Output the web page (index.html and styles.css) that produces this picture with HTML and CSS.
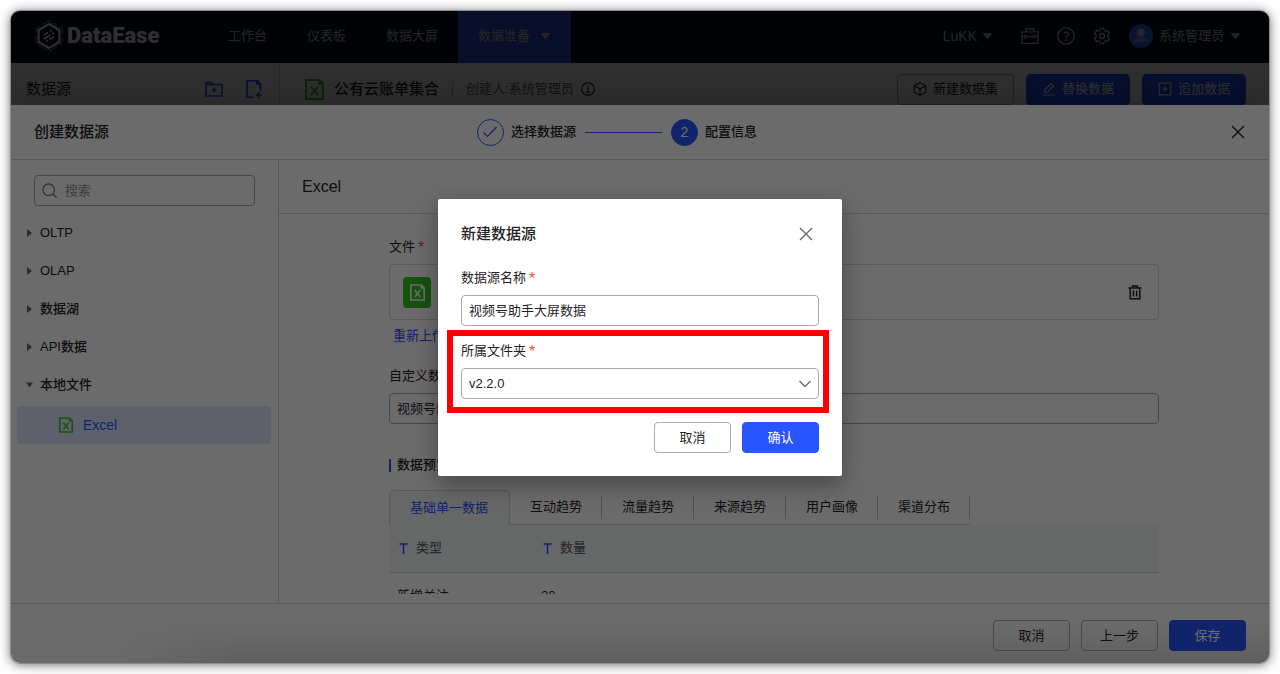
FILE: index.html
```html
<!DOCTYPE html>
<html lang="zh-CN">
<head>
<meta charset="utf-8">
<meta name="viewport" content="width=device-width, initial-scale=1">
<title>DataEase</title>
<link rel="stylesheet" href="styles.css">
</head>
<body>
<svg class="defs" aria-hidden="true">
  <symbol id="excel" viewBox="0 0 18 20"><path d="M1 1h12.500L17 4.500V19H1z" fill="none" stroke="currentColor" stroke-width="2"/><path d="M12.500 0.500v5h5z" fill="currentColor"/><path d="M5.500 7l7 8.500M12.500 7l-7 8.500" stroke="currentColor" stroke-width="2" fill="none"/></symbol>
  <symbol id="close" viewBox="0 0 14 14"><path d="M1 1l12 12M13 1L1 13" stroke="currentColor" stroke-width="1.400" fill="none"/></symbol>
  <symbol id="caret" viewBox="0 0 11 8"><path d="M0.500 1h10L5.500 7.500z" fill="currentColor"/></symbol>
  <symbol id="text-type" viewBox="0 0 9 11"><path d="M0.500 1h8M4.500 1v10" stroke="currentColor" stroke-width="1.500" fill="none"/></symbol>
</svg>
<div class="window">
  <header class="topbar">
    <a class="brand" href="#" aria-label="DataEase">
      <svg class="brand-mark" viewBox="0 0 28 32" fill="none" stroke="currentColor"><path d="M14 4l10.400 6v12L14 28 3.600 22V10z" stroke-width="2.200"/><path d="M14 0.700L27.200 8.300v15.400L14 31.300 0.800 23.700V8.300z" stroke-width="0.600" stroke-dasharray="9 3"/><path d="M9 15l4.200-2.500M15 11.400l1.500-.9M8.500 19.200l7-4.200M17.200 14l2-1.200M11.300 21.500l1.500-.9M14.500 19.600l4.500-2.700" stroke-width="1.800"/></svg>
      <span>DataEase</span>
    </a>
    <nav class="menu">
      <a href="#">工作台</a>
      <a href="#">仪表板</a>
      <a href="#">数据大屏</a>
      <a class="active" href="#">数据准备<svg class="caret"><use href="#caret"/></svg></a>
    </nav>
    <div class="tools">
      <button class="bare org">LuKK<svg class="caret"><use href="#caret"/></svg></button>
      <button class="bare" aria-label="工具箱"><svg class="tool-icon" viewBox="0 0 18 18" fill="none" stroke="currentColor" stroke-width="1.200"><path d="M5 5V1.800h8V5M1 5h16v11.400H1zM1 9.500h2.200M6.200 9.500h5.600M14.800 9.500H17"/><circle cx="4.700" cy="9.500" r="1.500"/><circle cx="13.300" cy="9.500" r="1.500"/></svg></button>
      <button class="bare" aria-label="帮助"><svg class="tool-icon" viewBox="0 0 18 18" fill="none" stroke="currentColor" stroke-width="1.300"><circle cx="9" cy="9" r="8.200"/><path d="M6.800 7.300a2.200 2.200 0 1 1 3.300 1.900c-.8.500-1.100.8-1.100 1.700M9 12.300v1.500"/></svg></button>
      <button class="bare" aria-label="设置"><svg class="tool-icon" viewBox="0 0 18 18" fill="none" stroke="currentColor" stroke-width="1.300" stroke-linejoin="round"><path d="M7.300 1.300h3.400l.5 2 1.500.9 2-.6 1.700 2.900-1.500 1.500v2l1.500 1.500-1.700 2.900-2-.6-1.500.9-.5 2H7.300l-.5-2-1.500-.9-2 .6-1.700-2.900L3.100 10V8L1.600 6.500l1.700-2.900 2 .6 1.500-.9z"/><circle cx="9" cy="9" r="2.500"/></svg></button>
      <button class="bare user"><svg class="avatar" viewBox="0 0 24 24"><circle class="avatar-bg" cx="12" cy="12" r="12"/><circle class="avatar-face" cx="12" cy="8.500" r="4"/><path class="avatar-body" d="M5.500 18c0-3.500 2-4.500 4-4.500h5c2 0 4 1 4 4.500z"/></svg>系统管理员<svg class="caret"><use href="#caret"/></svg></button>
    </div>
  </header>
  <section class="subbar">
    <div class="sub-side">
      <h2>数据源</h2>
      <button class="bare" aria-label="新建文件夹"><svg class="sub-icon" viewBox="0 0 18 18" fill="none" stroke="currentColor" stroke-width="1.600"><path d="M1 16V2.500h5.500l1.500 2h9V16zM1 4.500h8M9 7.500v5M6.500 10h5"/></svg></button>
      <button class="bare" aria-label="新建数据源"><svg class="sub-icon" viewBox="0 0 18 18" fill="none" stroke="currentColor" stroke-width="1.600"><path d="M8.500 17.200H2V.8h10.500l3 3v7.200M12 .8v3.500h3.500M13.500 12v6M10.500 15h6"/></svg></button>
    </div>
    <div class="sub-main">
      <svg class="source-icon"><use href="#excel"/></svg>
      <h1>公有云账单集合</h1>
      <span class="creator">创建人:系统管理员</span>
      <svg class="info" viewBox="0 0 14 14" fill="none" stroke="currentColor" stroke-width="1.200"><circle cx="7" cy="7" r="6.300"/><path d="M5.500 6.200H7V10M5.200 10.200h3.600M6.300 3.900h1.200"/></svg>
      <button class="btn sub-btn"><svg class="btn-icon" viewBox="0 0 14 14" fill="none" stroke="currentColor" stroke-width="1.200"><path d="M7 .8l5.800 3v6.400L7 13.200l-5.800-3V3.800zM1.200 3.800L7 6.800l5.800-3M7 6.800v6.400"/></svg>新建数据集</button>
      <button class="btn primary sub-btn"><svg class="btn-icon" viewBox="0 0 14 14" fill="none" stroke="currentColor" stroke-width="1.200"><path d="M2.500 8L9 1.500 11.500 4 5 10.500H2.500zM1 13h12"/></svg>替换数据</button>
      <button class="btn primary sub-btn"><svg class="btn-icon" viewBox="0 0 14 14" fill="none" stroke="currentColor" stroke-width="1.200"><path d="M1.200 1.200h11.600v11.600H1.200zM7 4.500v5M4.500 7h5"/></svg>追加数据</button>
    </div>
  </section>

  <div class="drawer-layer">
    <section class="drawer">
      <header class="drawer-head">
        <h2>创建数据源</h2>
        <ol class="steps">
          <li><span class="dot done"><svg viewBox="0 0 16 12" fill="none" stroke="currentColor" stroke-width="1.200"><path d="M1.500 6.500L5.500 10.500 14.500 1"/></svg></span>选择数据源</li>
          <li class="link"></li>
          <li><span class="dot">2</span>配置信息</li>
        </ol>
        <button class="bare end" aria-label="关闭"><svg class="close"><use href="#close"/></svg></button>
      </header>
      <div class="drawer-body">
        <aside class="side">
          <label class="search">
            <svg viewBox="0 0 15 15" fill="none" stroke="currentColor" stroke-width="1.200"><circle cx="6.700" cy="6.700" r="5.800"/><path d="M11 11l3.500 3.500"/></svg>
            <input type="text" placeholder="搜索" aria-label="搜索">
          </label>
          <ul class="tree">
            <li><button class="node"><i class="arrow"></i>OLTP</button></li>
            <li><button class="node"><i class="arrow"></i>OLAP</button></li>
            <li><button class="node"><i class="arrow"></i>数据湖</button></li>
            <li><button class="node"><i class="arrow"></i>API数据</button></li>
            <li><button class="node"><i class="arrow open"></i>本地文件</button>
              <ul><li><button class="node leaf"><svg><use href="#excel"/></svg>Excel</button></li></ul>
            </li>
          </ul>
        </aside>
        <main class="main">
          <h3 class="main-title">Excel</h3>
          <div class="form">
            <span class="label">文件<b>*</b></span>
            <div class="file">
              <span class="file-icon"><svg><use href="#excel"/></svg></span>
              <button class="bare" aria-label="删除"><svg class="trash" viewBox="0 0 14 15" fill="none" stroke="currentColor" stroke-width="1.500"><path d="M0.500 3h13M4.500 2.500V1h5v1.500M2.200 3v10.800h9.600V3M5.400 5.500v6M8.600 5.500v6"/></svg></button>
            </div>
            <a class="reupload" href="#">重新上传</a>
            <label class="label" for="custom-name">自定义数据源名称</label>
            <input class="input" id="custom-name" type="text" value="视频号助手大屏数据">
            <h4 class="preview">数据预览</h4>
            <div class="tabs" role="tablist">
              <button class="tab current" role="tab" aria-selected="true">基础单一数据</button>
              <button class="tab" role="tab">互动趋势</button>
              <button class="tab" role="tab">流量趋势</button>
              <button class="tab" role="tab">来源趋势</button>
              <button class="tab" role="tab">用户画像</button>
              <button class="tab" role="tab">渠道分布</button>
            </div>
            <table class="grid">
              <thead><tr><th class="kind"><svg><use href="#text-type"/></svg>类型</th><th><svg><use href="#text-type"/></svg>数量</th></tr></thead>
              <tbody><tr><td>新增关注</td><td>20</td></tr></tbody>
            </table>
          </div>
        </main>
      </div>
      <footer class="drawer-foot">
        <button class="btn">取消</button>
        <button class="btn">上一步</button>
        <button class="btn primary">保存</button>
      </footer>
    </section>
  </div>

  <div class="modal-layer">
    <form class="modal" role="dialog" aria-labelledby="modal-title">
      <header class="modal-head">
        <h2 id="modal-title">新建数据源</h2>
        <button class="bare" type="button" aria-label="关闭"><svg class="close"><use href="#close"/></svg></button>
      </header>
      <div class="field">
        <label class="label" for="name">数据源名称<b>*</b></label>
        <input class="input" id="name" type="text" value="视频号助手大屏数据">
      </div>
      <div class="field marked">
        <label class="label" for="folder">所属文件夹<b>*</b></label>
        <div class="select">
          <select class="input" id="folder"><option>v2.2.0</option></select>
          <svg viewBox="0 0 12 8" fill="none" stroke="currentColor" stroke-width="1.300"><path d="M0.500 1L6 6.500 11.500 1"/></svg>
        </div>
      </div>
      <div class="modal-foot">
        <button class="btn" type="button">取消</button>
        <button class="btn primary" type="button">确认</button>
      </div>
    </form>
  </div>
</div>
</body>
</html>
```
FILE: styles.css
```css
* { box-sizing: border-box; }

body {
  margin: 0;
  padding: 11px;
  height: 100vh;
  background: #fff;
  color: #1f2329;
  font: 13px/22px "Liberation Sans", "Noto Sans CJK SC", sans-serif;
}

h1, h2, h3, h4, ul, ol { margin: 0; padding: 0; font-weight: 500; list-style: none; }
h1, h2 { font-size: 15px; line-height: 24px; }
button, input, select { font: inherit; color: inherit; }
a { color: inherit; text-decoration: none; }
svg { display: block; flex: none; }
.defs { position: absolute; width: 0; height: 0; }

.window {
  position: relative;
  height: 100%;
  display: flex;
  flex-direction: column;
  overflow: hidden;
  border-radius: 9px;
  background: #fff;
}
body::before {
  content: "";
  position: absolute;
  inset: 11px;
  border-radius: 9px;
  box-shadow: 0 0 0 1px #8c8c8c, 0 1px 12px rgba(0, 0, 0, .65);
}

/* Controls */
.bare {
  display: flex;
  align-items: center;
  padding: 0;
  border: 0;
  background: none;
  white-space: nowrap;
}
.btn {
  display: flex;
  align-items: center;
  justify-content: center;
  gap: 6px;
  min-width: 77px;
  height: 31px;
  padding: 0 15px;
  border: 1px solid #a6a9b0;
  border-radius: 4px;
  background: transparent;
  white-space: nowrap;
}
.btn.primary { border-color: #2955ff; background: #2955ff; color: #fff; }
.btn-icon { width: 14px; height: 14px; }
.input {
  display: block;
  width: 100%;
  height: 31px;
  padding: 0 7px 2px;
  border: 1px solid #a6a9b0;
  border-radius: 4px;
  background: transparent;
  outline: 0;
}
.label { display: block; }
.label b { margin-left: 3px; color: #f54a45; font-size: 16px; line-height: 16px; font-weight: 400; vertical-align: -2px; }
.caret { width: 11px; height: 8px; }
.close { width: 14px; height: 14px; }

/* Top bar */
.topbar {
  display: flex;
  align-items: center;
  height: 52px;
  flex: none;
  padding: 0 28px 3px 24px;
  background: #050e21;
  color: #c8cbd0;
}
.brand { display: flex; align-items: center; gap: 4px; width: 173px; color: #fff; font: 900 22px/30px Roboto, sans-serif; }
.brand-mark { width: 28px; height: 32px; }
.menu { display: flex; align-self: stretch; margin-bottom: -3px; }
.menu a { display: flex; align-items: center; gap: 10px; padding: 0 20px 3px; }
.menu .active { background: #3450e6; }
.tools { display: flex; align-items: center; gap: 18px; margin-left: auto; }
.tool-icon { width: 18px; height: 18px; }
.org { gap: 5px; margin-right: 10px; font-size: 14px; }
.user { gap: 6px; }
.avatar { width: 24px; height: 24px; }
.avatar-bg { fill: #3370ff; }
.avatar-face { fill: #b5c8f5; }
.avatar-body { fill: #7b9be8; }

.subbar { display: flex; flex: 1; }
.sub-side, .sub-main { display: flex; padding-top: 10px; align-items: center; height: 42px; }
.sub-side { width: 269px; padding-left: 15px; padding-right: 16px; border-right: 1px solid #d0d3d6; gap: 22px; color: #2955ff; }
.sub-side h2 { margin-right: auto; color: #1f2329; font-weight: 400; }
.sub-icon { width: 18px; height: 18px; }
.sub-main { flex: 1; padding-left: 25px; padding-right: 23px; }
.source-icon { width: 19px; height: 21px; margin-right: 10px; color: #34c724; }
.creator { margin-left: 13px; padding-left: 13px; color: #646a73; line-height: 16px; border-left: 1px solid #bbbfc4; }
.info { width: 14px; height: 14px; margin-left: 7px; margin-right: auto; }
.sub-btn { margin-left: 12px; }

/* Drawer */
.drawer-layer {
  position: absolute;
  inset: 0;
  display: flex;
  padding-top: 94px;
  background: rgba(0, 0, 0, .56);
}
.drawer { display: flex; flex: 1; flex-direction: column; min-width: 0; background: #fff; box-shadow: 0 -8px 24px rgba(0, 0, 0, .15); }
.drawer-head {
  display: grid;
  grid-template-columns: 1fr auto 1fr;
  align-items: center;
  height: 55px;
  flex: none;
  padding: 0 24px 0 23px;
  border-bottom: 1px solid #d5d6d8;
}
.end { justify-self: end; }
.steps { display: flex; align-items: center; padding-right: 45px; }
.steps li { display: flex; align-items: center; gap: 7px; }
.steps .link { width: 77px; height: 1px; margin: 0 9px; background: #2955ff; }
.dot {
  display: grid;
  place-items: center;
  width: 27px;
  height: 27px;
  border: 1px solid #2955ff;
  border-radius: 50%;
  background: #2955ff;
  color: #fff;
  font-size: 14px;
}
.dot.done { background: transparent; color: #2955ff; }
.dot svg { width: 16px; height: 12px; }

.drawer-body { display: flex; flex: 1; min-height: 0; }
.side { width: 268px; flex: none; padding: 15px 7px 0 6px; border-right: 1px solid #d0d2d4; }
.search {
  display: flex;
  align-items: center;
  gap: 8px;
  height: 31px;
  margin: 0 16px 8px 17px;
  padding: 0 7px;
  border: 1px solid #a6a9b0;
  border-radius: 4px;
  color: #646a73;
}
.search svg { width: 15px; height: 15px; }
.search input { flex: 1; min-width: 0; padding: 0; border: 0; outline: 0; background: none; }
.search input::placeholder { color: #8f959e; }
.tree ul { padding-top: 2px; }
.node {
  display: flex;
  align-items: center;
  gap: 7px;
  width: 100%;
  height: 38px;
  padding: 0 9px;
  border: 0;
  border-radius: 4px;
  background: none;
}
.arrow { width: 7px; height: 8px; background: #646a73; clip-path: polygon(15% 0, 85% 50%, 15% 100%); }
.arrow.open { clip-path: polygon(0 20%, 100% 20%, 50% 80%); }
.leaf { gap: 10px; padding-left: 42px; background: #e0e8ff; color: #2955ff; font-size: 14px; }
.leaf svg { width: 14px; height: 16px; color: #34c724; }

.main { display: flex; flex: 1; flex-direction: column; min-width: 0; }
.main-title { flex: none; height: 54px; padding-left: 23px; border-bottom: 1px solid #d5d6d8; font-size: 16px; line-height: 53px; }
.form { flex: 1; min-height: 0; margin-bottom: 9px; padding: 22px 110px 0; overflow: hidden; }
.file {
  display: flex;
  align-items: center;
  justify-content: space-between;
  height: 56px;
  margin: 6px 0 5px;
  padding: 0 16px 0 13px;
  border: 1px solid #d9dadc;
  border-radius: 4px;
}
.file-icon { display: grid; place-items: center; width: 28px; height: 31px; border-radius: 4px; background: #34c724; color: #fff; }
.file-icon svg { width: 15px; height: 17px; }
.trash { width: 14px; height: 15px; }
.reupload { display: block; margin: 0 4px 18px; color: #2955ff; }
.form .input { margin: 6px 0 30px; }
.preview { display: flex; align-items: center; gap: 6px; }
.preview::before { content: ""; width: 2px; height: 13px; background: #2955ff; }
.tabs { display: flex; margin-top: 14px; }
.tab {
  display: flex;
  align-items: center;
  height: 35px;
  padding: 0 0 0 20px;
  border: 0;
  border-bottom: 1px solid #cfd2d4;
  background: none;
}
.tab::after { content: ""; width: 1px; height: 23px; margin-left: 19px; background: #bbbfc4; }
.tab.current {
  padding: 0 21px 0 20px;
  border: 1px solid #cfd2d4;
  border-bottom: 0;
  border-radius: 5px 5px 0 0;
  background: #f3f8f8;
  color: #2955ff;
}
.tab.current::after { content: none; }
.grid { width: 100%; border-collapse: collapse; table-layout: fixed; text-align: left; }
.grid th { height: 47px; padding: 0 10px; border-bottom: 1px solid #d0d3d6; background: #f3f8f8; color: #646a73; font-weight: 500; }
.grid .kind { width: 144px; }
.grid th svg { display: inline-block; width: 9px; height: 11px; margin-right: 8px; vertical-align: -2px; color: #2955ff; }
.grid td { height: 48px; padding: 0 8px; }

.drawer-foot {
  display: flex;
  justify-content: flex-end;
  gap: 11px;
  flex: none;
  height: 60px;
  padding: 16px 23px 0;
  border-top: 1px solid #d5d6d8;
  background: linear-gradient(to right, #fff 8%, transparent 18%), linear-gradient(#fff 30%, #e2e2e2);
}

/* Modal */
.modal-layer {
  position: absolute;
  inset: 0;
  display: flex;
  justify-content: center;
  align-items: flex-start;
  padding-top: 188px;
  background: rgba(0, 0, 0, .58);
}
.modal { width: 404px; padding: 23px; border-radius: 2px; background: #fff; box-shadow: 0 8px 24px rgba(0, 0, 0, .35); }
.modal-head { display: flex; justify-content: space-between; align-items: center; margin-bottom: 21px; }
.modal-head .bare { margin-right: 6px; color: #646a73; }
.field .label { margin-bottom: 6px; }
.marked { position: relative; margin-top: 14px; }
.marked::after { content: ""; position: absolute; inset: -10px -10px -14px -14px; border: 6px solid #f00; pointer-events: none; }
.select { position: relative; }
.select select { padding-bottom: 0; appearance: none; }
.select svg { position: absolute; top: 12px; right: 8px; width: 12px; height: 8px; color: #646a73; }
.modal-foot { display: flex; justify-content: flex-end; gap: 11px; margin-top: 23px; }
```
